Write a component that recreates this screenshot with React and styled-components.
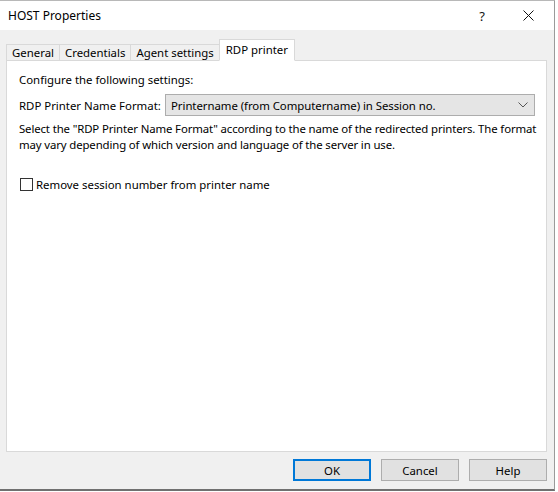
import React, { useState } from "react";
import styled, { createGlobalStyle } from "styled-components";

const GlobalStyle = createGlobalStyle`
  html, body {
    margin: 0;
    padding: 0;
    background: #ffffff;
  }
  body {
    font-family: "Segoe UI", "Noto Sans", "Open Sans", sans-serif;
    font-size: 11.4px;
    color: #000;
  }
`;

const Window = styled.div`
  width: 554px;
  height: 488px;
  border-top: 1px solid #b8b8b8;
  border-right: 1px solid #9a9a9a;
  border-bottom: 2px solid #707070;
  background: #f0f0f0;
  display: flex;
  flex-direction: column;
`;

const TitleBar = styled.div`
  height: 29px;
  background: #fff;
  display: flex;
  align-items: center;
  padding-left: 8px;
  padding-right: 3px;
`;

const Title = styled.div`
  flex: 1;
  font-size: 12px;
`;

const TitleButton = styled.div`
  width: ${(p) => p.$w || 46}px;
  height: 29px;
  display: flex;
  align-items: center;
  justify-content: center;
  font-size: 13px;
  color: #111;
`;

const Body = styled.div`
  flex: 1;
  display: flex;
  flex-direction: column;
  padding: 8px 7px 0 6px;
`;

const TabStrip = styled.div`
  display: flex;
  align-items: flex-end;
  height: 22px;
  position: relative;
  z-index: 1;
`;

const Tab = styled.div`
  height: ${(p) => (p.$active ? "22px" : "17px")};
  padding: 0 ${(p) => (p.$active ? "6px" : "5px")};
  margin-left: ${(p) => (p.$first ? "0" : "-1px")};
  background: ${(p) => (p.$active ? "#fff" : "#f0f0f0")};
  border: 1px solid #d9d9d9;
  border-bottom: ${(p) => (p.$active ? "1px solid #fff" : "1px solid #d9d9d9")};
  box-sizing: border-box;
  display: flex;
  align-items: ${(p) => (p.$active ? "flex-start" : "center")};
  padding-top: ${(p) => (p.$active ? "2px" : "0")};
  white-space: nowrap;
  margin-bottom: -1px;
`;

const Panel = styled.div`
  width: 541px;
  height: 392px;
  box-sizing: border-box;
  background: #fff;
  border: 1px solid #d9d9d9;
  padding: 11px 10px 0 12px;
`;

const Line = styled.div`
  line-height: 16px;
`;

const FieldRow = styled.div`
  display: flex;
  align-items: center;
  margin-top: 6px;
`;

const FieldLabel = styled.div`
  width: 146px;
  white-space: nowrap;
`;

const Select = styled.div`
  width: 370px;
  height: 22px;
  box-sizing: border-box;
  background: #e5e5e5;
  border: 1px solid #adadad;
  display: flex;
  align-items: center;
  padding-left: 5px;
  padding-right: 6px;
`;

const SelectText = styled.div`
  flex: 1;
  letter-spacing: -0.05px;
`;

const Description = styled.div`
  margin-top: 5px;
  line-height: 16px;
  white-space: nowrap;
  letter-spacing: -0.13px;
`;

const CheckRow = styled.label`
  display: flex;
  align-items: center;
  margin-top: 24px;
  margin-left: 1px;
`;

const Box = styled.span`
  width: 13px;
  height: 13px;
  box-sizing: border-box;
  border: 1px solid #333;
  background: #fff;
  margin-right: 3px;
`;

const Footer = styled.div`
  display: flex;
  justify-content: flex-end;
  gap: 10px;
  padding-top: 7px;
  width: 541px;
`;

const Button = styled.div`
  width: 78px;
  height: 22px;
  box-sizing: border-box;
  background: #e1e1e1;
  border: ${(p) => (p.$default ? "2px solid #0078d7" : "1px solid #adadad")};
  display: flex;
  align-items: center;
  justify-content: center;
`;

const Chevron = () => (
  <svg width="10" height="6" viewBox="0 0 10 6">
    <path d="M0.5 0.5 L5 5 L9.5 0.5" fill="none" stroke="#555" strokeWidth="1" />
  </svg>
);

const CloseIcon = () => (
  <svg width="11" height="11" viewBox="0 0 11 11">
    <path d="M0.5 0.5 L10.5 10.5 M10.5 0.5 L0.5 10.5" stroke="#111" strokeWidth="1" />
  </svg>
);

const tabs = ["General", "Credentials", "Agent settings", "RDP printer"];

const App = () => {
  const [active, setActive] = useState(3);
  return (
    <>
      <GlobalStyle />
      <Window>
        <TitleBar>
          <Title>HOST Properties</Title>
          <TitleButton>?</TitleButton>
          <TitleButton>
            <CloseIcon />
          </TitleButton>
        </TitleBar>
        <Body>
          <TabStrip>
            {tabs.map((t, i) => (
              <Tab key={t} $first={i === 0} $active={i === active} onClick={() => setActive(i)}>
                {t}
              </Tab>
            ))}
          </TabStrip>
          <Panel>
            <Line>Configure the following settings:</Line>
            <FieldRow>
              <FieldLabel>RDP Printer Name Format:</FieldLabel>
              <Select>
                <SelectText>Printername (from Computername) in Session no.</SelectText>
                <Chevron />
              </Select>
            </FieldRow>
            <Description>
              Select the "RDP Printer Name Format" according to the name of the redirected printers. The format
              <br />
              may vary depending of which version and language of the server in use.
            </Description>
            <CheckRow>
              <Box />
              Remove session number from printer name
            </CheckRow>
          </Panel>
          <Footer>
            <Button $default>OK</Button>
            <Button>Cancel</Button>
            <Button>Help</Button>
          </Footer>
        </Body>
      </Window>
    </>
  );
};

export default App;
